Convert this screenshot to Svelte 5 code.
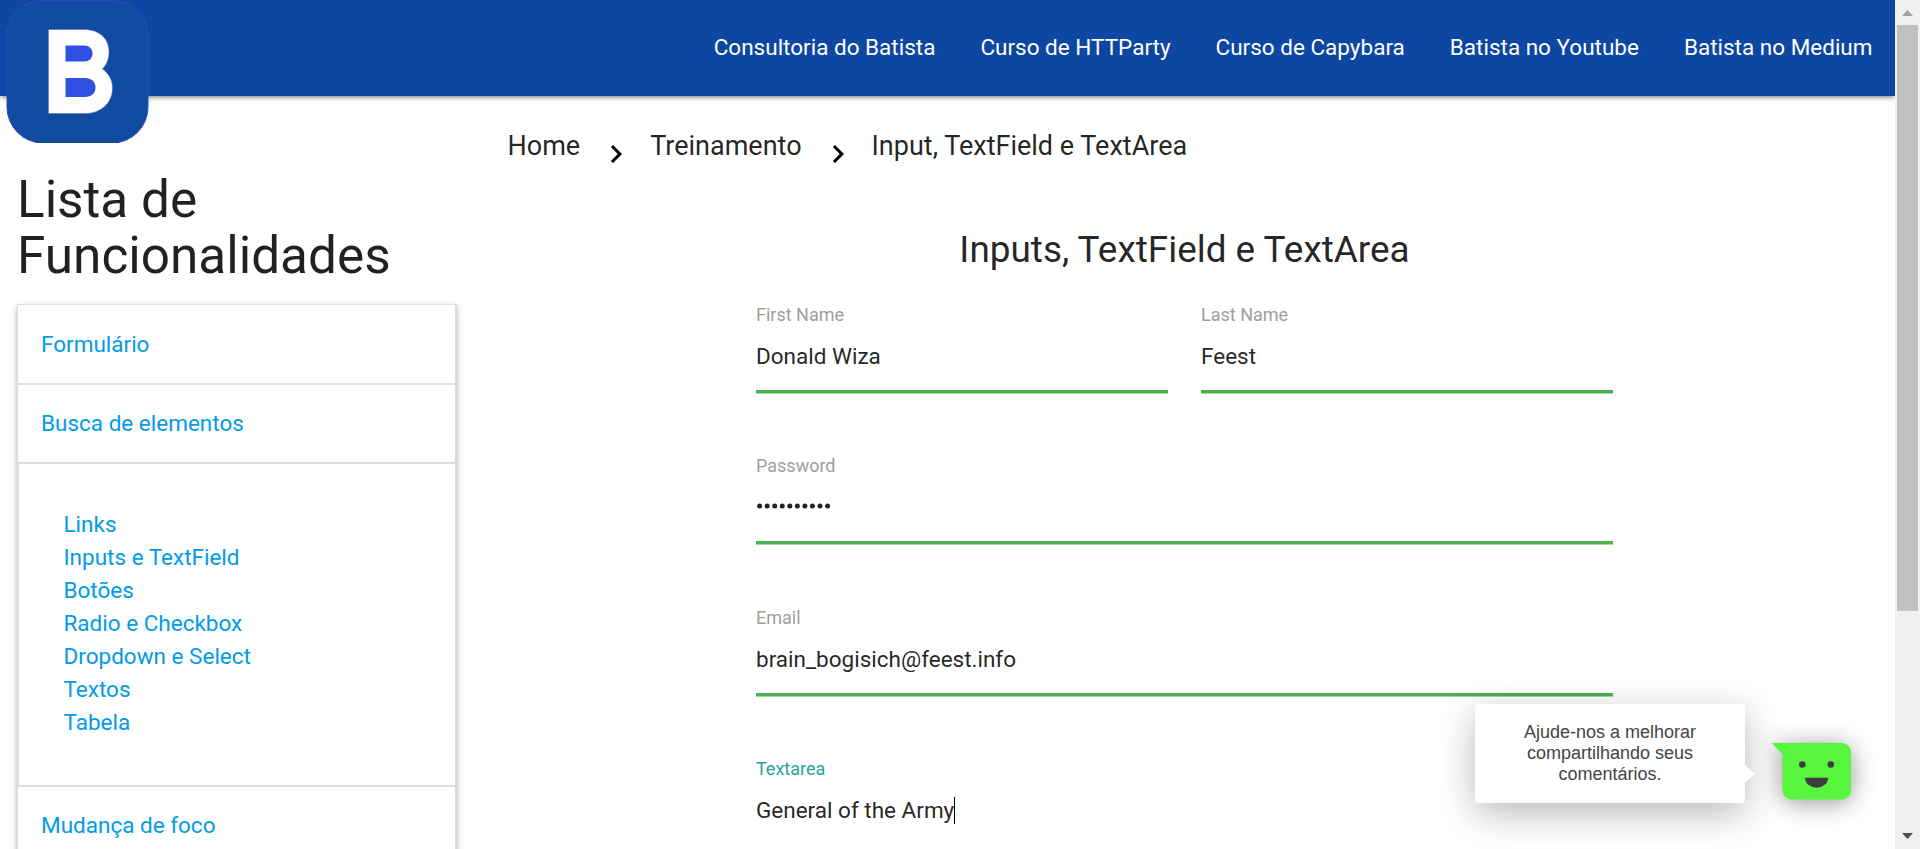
<script>
  const navLinks = ['Consultoria do Batista', 'Curso de HTTParty', 'Curso de Capybara', 'Batista no Youtube', 'Batista no Medium'];
  const subLinks = ['Links', 'Inputs e TextField', 'Botões', 'Radio e Checkbox', 'Dropdown e Select', 'Textos', 'Tabela'];
  const crumbs = ['Home', 'Treinamento', 'Input, TextField e TextArea'];
  const dots = Array.from({ length: 10 }, (_, i) => 3.6 + i * 7.55);
</script>

<div class="screen">
  <div class="page">
    <nav>
      <svg class="logo" width="143" height="143" viewBox="0 0 143 143">
        <path d="M1 36A35.500 35.500 0 0 1 36.500 .5H106A35.500 35.500 0 0 1 142 36V107A36 36 0 0 1 106 143H37A36 36 0 0 1 1 107Z" fill="#104ba0" stroke="#274bc5" />
        <path d="M30 142.500H113" stroke="#104ba0" stroke-width="2" />
        <path d="M42.500 29.500H78C93 29.500 103 38 103 52C103 59 101 64 96.500 69C102 73 106.500 79 106.500 88C106.500 103 95 113.500 79 113.500H42.500Z" fill="#fff" stroke="#5a6be0" stroke-width=".6" />
        <path d="M59.500 45.500H78C83 45.500 86.500 48.500 86.500 53.500C86.500 58.500 83 61.500 78 61.500H59.500Z" fill="#304fe3" />
        <path d="M59.500 78H79C85 78 89.500 81.500 89.500 87.500C89.500 93.500 85 97 79 97H59.500Z" fill="#304fe3" />
      </svg>
      <div class="links">
        {#each navLinks as link}<a href="#top">{link}</a>{/each}
      </div>
    </nav>

    <div class="columns">
      <aside>
        <h4>Lista de Funcionalidades</h4>
        <ul class="collapsible">
          <li class="header first"><a href="#top">Formulário</a></li>
          <li class="header"><a href="#top">Busca de elementos</a></li>
          <li class="body">
            {#each subLinks as link}<a href="#top">{link}</a>{/each}
          </li>
          <li class="header"><a href="#top">Mudança de foco</a></li>
        </ul>
      </aside>

      <main>
        <div class="crumbs">
          {#each crumbs as crumb, i}
            {#if i > 0}
              <svg width="36" height="36" viewBox="0 0 24 24"><path d="M10 6L8.590 7.410 13.170 12l-4.580 4.590L10 18l6-6z" /></svg>
            {/if}
            <span>{crumb}</span>
          {/each}
        </div>

        <form>
          <h5>Inputs, TextField e TextArea</h5>
          <div class="row">
            <div class="field"><label for="first">First Name</label><div class="value" id="first">Donald Wiza</div></div>
            <div class="field"><label for="last">Last Name</label><div class="value" id="last">Feest</div></div>
          </div>
          <div class="field">
            <label for="password">Password</label>
            <div class="value" id="password">
              <svg class="dots" width="80" height="54" viewBox="0 0 80 54">
                {#each dots as x}<circle cx={x} cy="26" r="2.500" fill="#212121" />{/each}
              </svg>
            </div>
          </div>
          <div class="field"><label for="email">Email</label><div class="value" id="email">brain_bogisich@feest.info</div></div>
          <div class="field"><label class="active" for="area">Textarea</label><div class="value area" id="area">General of the Army<i class="caret"></i></div></div>
        </form>
      </main>
    </div>
  </div>

  <div class="scrollbar">
    <svg width="25" height="25" viewBox="0 0 25 25"><path d="M7 16h11L12.500 10z" fill="#a3a3a3" /></svg>
    <div class="thumb"></div>
    <svg width="25" height="25" viewBox="0 0 25 25"><path d="M7 9h11L12.500 15z" fill="#505050" /></svg>
  </div>

  <div class="tip">Ajude-nos a melhorar compartilhando seus comentários.</div>
  <svg class="face" width="84" height="60" viewBox="0 0 84 60">
    <path d="M1.700 1H72a9 9 0 0 1 9 9V48.500a9 9 0 0 1-9 9H21.500a9 9 0 0 1-9-9V12.500Z" fill="#58f53e" />
    <circle cx="32.300" cy="22.500" r="3.300" fill="#3d3d3d" />
    <circle cx="60.800" cy="22.500" r="3.300" fill="#3d3d3d" />
    <path d="M35 35.800H58.200A11.600 10 0 0 1 35 35.800Z" fill="#3d3d3d" />
  </svg>
</div>

<style>
  :global(body) { margin: 0; overflow: hidden; }
  * { box-sizing: border-box; }
  .screen { position: relative; display: flex; width: 1920px; height: 849px; overflow: hidden; background: #fff; font-family: Roboto, sans-serif; font-size: 22.5px; color: rgba(0, 0, 0, .87); }
  .page { width: 1895px; height: 849px; overflow: hidden; }
  a { text-decoration: none; color: #039be5; }
  nav { position: relative; height: 96px; background: #0d47a1; box-shadow: 0 3px 3px rgba(0,0,0,.14), 0 4.5px 1.5px -3px rgba(0,0,0,.12), 0 1.5px 7.5px rgba(0,0,0,.2); }
  .logo { position: absolute; left: 6px; top: 0; }
  .links { display: flex; justify-content: flex-end; }
  .links a { padding: 0 22.5px; line-height: 94px; color: #fff; white-space: nowrap; }
  .columns { display: flex; }
  aside { width: 474px; padding: 76px 17px 0; }
  h4, h5 { margin: 0; font-weight: 400; }
  h4 { font-size: 51.3px; line-height: 56px; }
  .collapsible { list-style: none; margin: 20px 0 0; padding: 0; border: 1px solid #ddd; border-right-width: 2px; box-shadow: 0 3px 3px rgba(0,0,0,.14), 0 4.5px 1.5px -3px rgba(0,0,0,.12), 0 1.5px 7.5px rgba(0,0,0,.2); }
  .header { display: flex; align-items: center; height: 79px; padding: 0 0 2px 23px; border-bottom: 2px solid #ddd; }
  .header.first { height: 80px; padding-bottom: 1px; }
  .body { display: flex; flex-direction: column; padding: 44px 45px 46px 44.5px; border-left: 1px solid #ddd; border-bottom: 2px solid #ddd; }
  .body a { line-height: 33px; }
  main { width: 1421px; padding-top: 28px; }
  .crumbs { display: flex; height: 44px; padding-left: 33.5px; font-size: 27px; line-height: 44px; white-space: nowrap; }
  .crumbs svg { margin: 12px 16px 0 18px; fill: #000; }
  form { width: 857px; margin: 55px 0 0 282px; }
  h5 { font-size: 36.9px; line-height: 54px; text-align: center; }
  .row { display: flex; gap: 33px; }
  .row .field { flex: 1; }
  h5 + .row { margin-top: 24px; }
  .field { height: 151.33px; }
  .field label { display: block; height: 28px; font-size: 18px; line-height: 27px; color: #9e9e9e; }
  .field label.active { color: #26a69a; }
  .value { display: flex; height: 64px; border-bottom: 3px solid #4caf50; box-shadow: 0 1px #a5d7a7; font-size: 22.5px; line-height: 55px; white-space: nowrap; }
  .value.area { height: 90px; }
  .caret { width: 1px; height: 27px; margin-top: 14px; background: #000; }
  .scrollbar { display: flex; flex-direction: column; width: 25px; height: 849px; background: #f0f0f0; }
  .thumb { height: 586px; margin: 0 2px 213px; background: #c1c1c1; }
  .tip { position: absolute; left: 1475px; top: 704px; width: 270px; height: 99px; padding: 18px 40px; border-radius: 4px; background: #fff; color: #444; box-shadow: 0 10px 36px rgba(0,0,0,.28); font: 18px/21px "Liberation Sans", Arial, sans-serif; text-align: center; }
  .tip::after { content: ""; position: absolute; left: 270px; top: 61px; border: solid transparent; border-width: 9px 0 9px 10px; border-left-color: #fff; }
  .face { position: absolute; left: 1770px; top: 742px; overflow: visible; filter: drop-shadow(0 3px 12px rgba(0,0,0,.42)); }
</style>
